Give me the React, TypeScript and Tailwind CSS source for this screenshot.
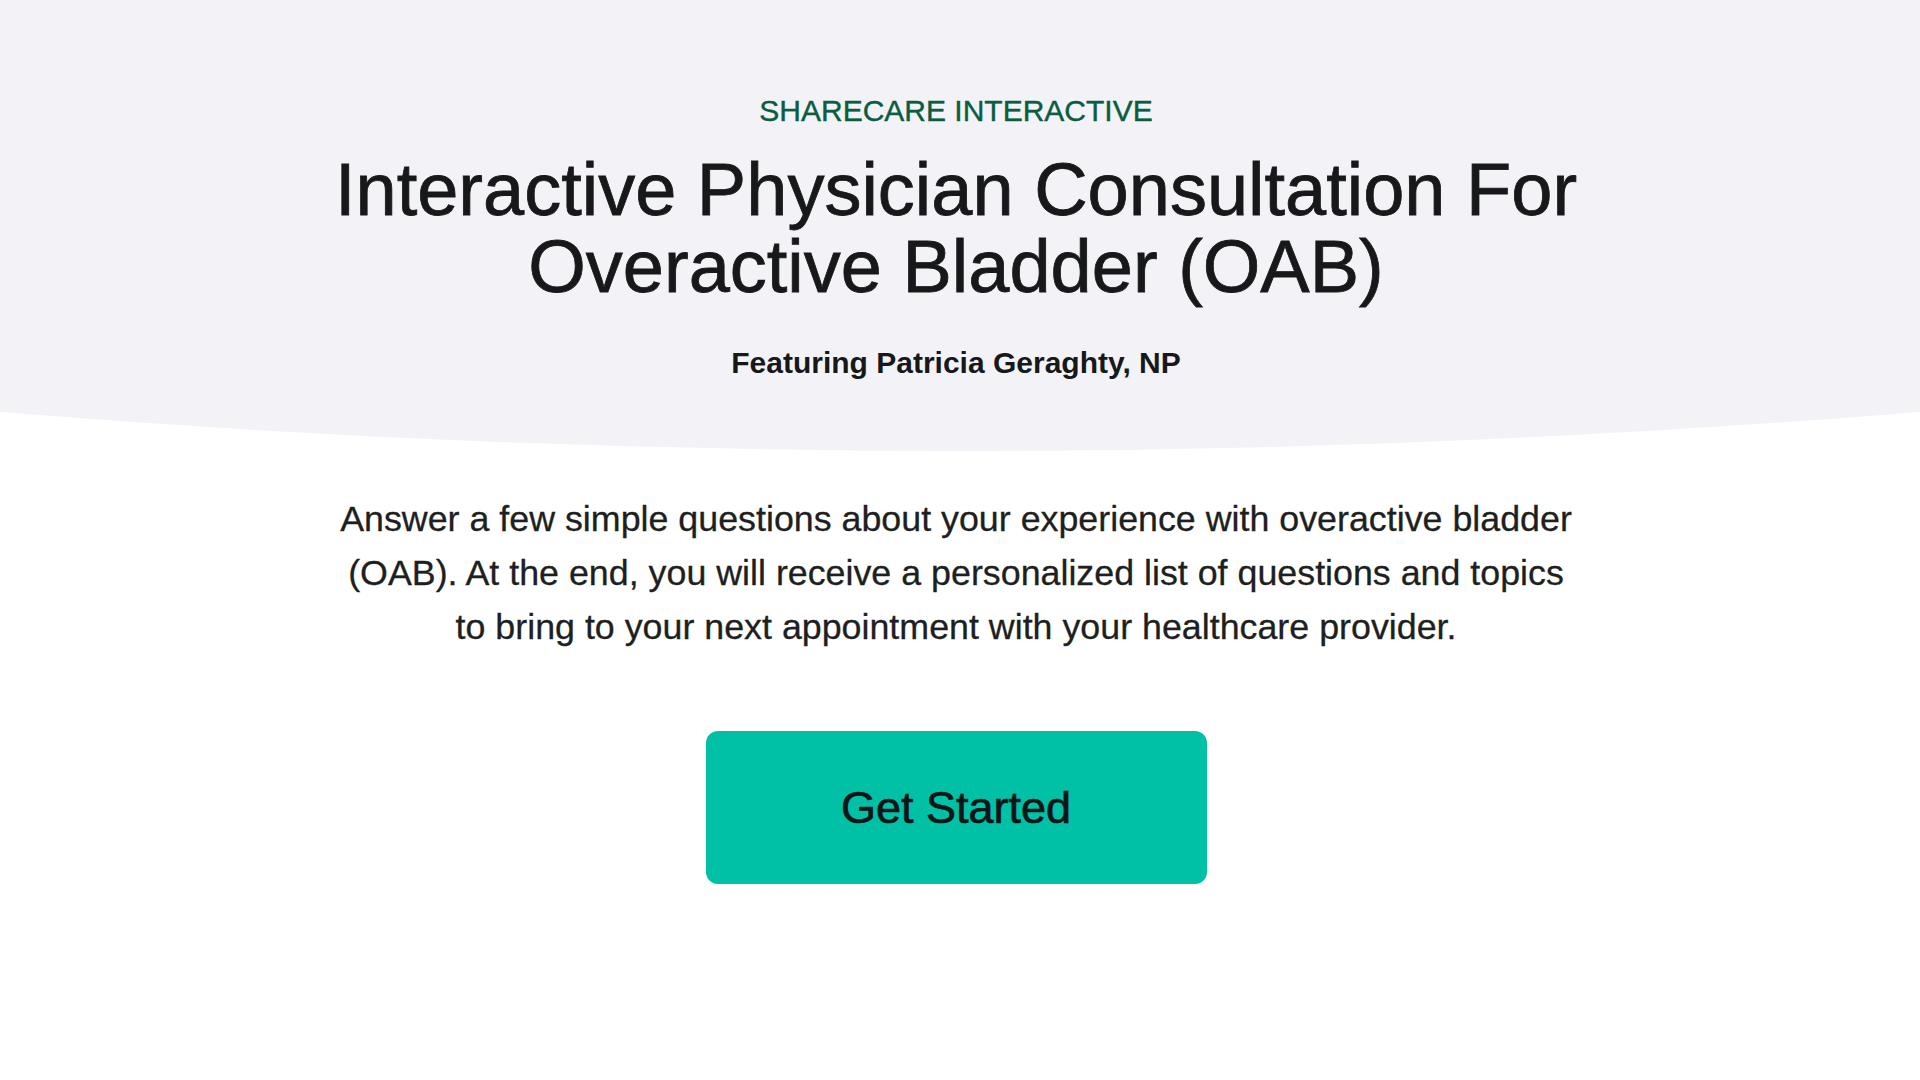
export default function App() {
  return (
    <div className="min-h-screen bg-white font-['Liberation_Sans',Arial,sans-serif] text-[#17181a]">
      <header className="bg-[#f3f3f7] pt-[93px] pb-[31px] pr-2">
        <div className="mx-auto flex max-w-[1300px] flex-col items-center text-center">
          <p className="text-[30px] leading-[36px] text-[#0b5c40] [-webkit-text-stroke:0.4px_#0b5c40]">
            SHARECARE INTERACTIVE
          </p>
          <h1 className="mt-[22px] max-w-[1280px] text-[74px] leading-[77px] text-[#17181a] [-webkit-text-stroke:0.8px_#17181a]">
            Interactive Physician Consultation For Overactive Bladder (OAB)
          </h1>
          <p className="mt-[40px] text-[30px] font-bold leading-[36px]">Featuring Patricia Geraghty, NP</p>
        </div>
      </header>
      <svg className="block h-[40px] w-full" viewBox="0 0 1920 40" preserveAspectRatio="none">
        <path d="M0 0 H1920 Q960 78 0 0 Z" fill="#f3f3f7" />
      </svg>
      <main className="flex flex-col items-center pt-[40px] pr-2 text-center">
        <p className="max-w-[1240px] text-[35.8px] leading-[54px] text-[#1e1f21] [-webkit-text-stroke:0.3px_#1e1f21]">
          Answer a few simple questions about your experience with overactive bladder (OAB). At the end, you will
          receive a personalized list of questions and topics to bring to your next appointment with your healthcare
          provider.
        </p>
        <button className="mt-[77px] h-[153px] w-[501px] rounded-xl bg-[#00c0a5] text-[45px] text-[#111417] [-webkit-text-stroke:0.7px_#111417]">
          Get Started
        </button>
      </main>
    </div>
  )
}
